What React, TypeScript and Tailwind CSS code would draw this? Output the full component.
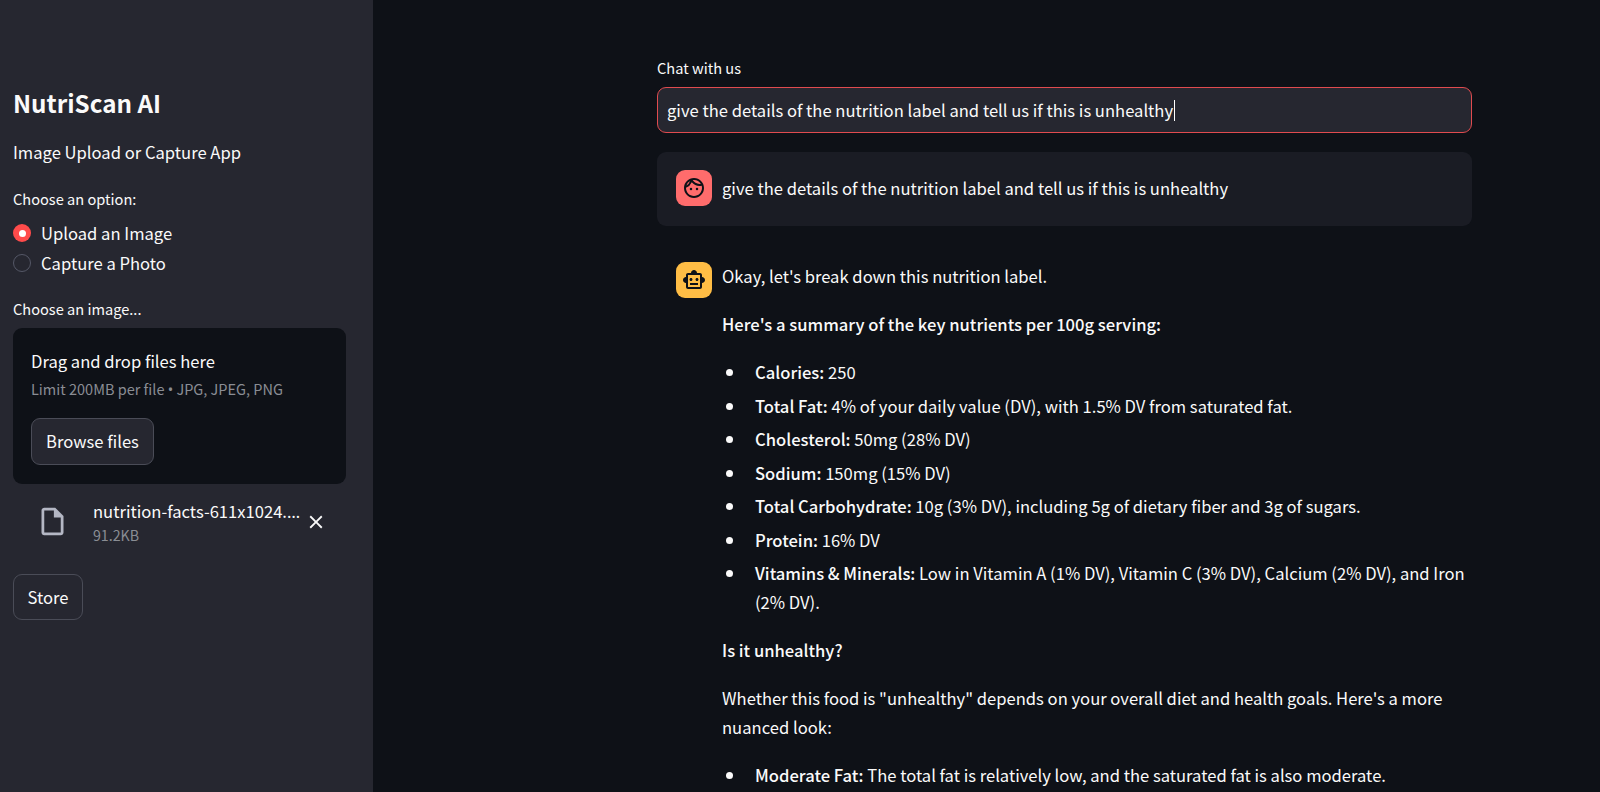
import { MdClose, MdOutlineFace, MdOutlineInsertDriveFile, MdOutlineSmartToy } from 'react-icons/md'

const nutrients = [
  { name: 'Calories:', text: ' 250' },
  { name: 'Total Fat:', text: ' 4% of your daily value (DV), with 1.5% DV from saturated fat.' },
  { name: 'Cholesterol:', text: ' 50mg (28% DV)' },
  { name: 'Sodium:', text: ' 150mg (15% DV)' },
  { name: 'Total Carbohydrate:', text: ' 10g (3% DV), including 5g of dietary fiber and 3g of sugars.' },
  { name: 'Protein:', text: ' 16% DV' },
  { name: 'Vitamins & Minerals:', text: ' Low in Vitamin A (1% DV), Vitamin C (3% DV), Calcium (2% DV), and Iron (2% DV).' },
]

const question = 'give the details of the nutrition label and tell us if this is unhealthy'

function Bullet({ name, text }: { name: string; text: string }) {
  return (
    <li className="mb-[4.5px] flex">
      <span className="mt-[11px] ml-[4px] h-[7px] w-[7px] shrink-0 rounded-full bg-[#fafafa]" />
      <div className="ml-[22px] min-w-0 flex-1">
        <strong className="font-medium">{name}</strong>
        {text}
      </div>
    </li>
  )
}

export default function App() {
  return (
    <div className="flex h-[792px] w-[1600px] overflow-hidden bg-[#0e1117] font-['Noto_Sans_CJK_SC','Noto_Sans',sans-serif] text-[16.6px] text-[#fafafa]">
      {/* Sidebar */}
      <aside className="flex w-[373px] shrink-0 flex-col bg-[#262730] px-[13px] pt-[85px]">
        <h2 className="text-[24.2px] leading-[36px] font-bold">NutriScan AI</h2>
        <p className="mt-[17px] leading-[28px]">Image Upload or Capture App</p>

        <label className="mt-[23px] text-[14.6px] leading-[20px]">Choose an option:</label>
        <div className="mt-[10px] flex flex-col gap-[2px] leading-[28px]">
          <div className="flex items-center gap-[10px]">
            <span className="flex h-[18px] w-[18px] items-center justify-center rounded-full bg-[#ff4b4b]">
              <span className="h-[7px] w-[7px] rounded-full bg-white" />
            </span>
            Upload an Image
          </div>
          <div className="flex items-center gap-[10px]">
            <span className="h-[18px] w-[18px] rounded-full border border-[#555867] bg-[#262730]" />
            Capture a Photo
          </div>
        </div>

        <label className="mt-[22px] text-[14.6px] leading-[20px]">Choose an image...</label>
        <div className="mt-[9px] flex h-[156px] w-[333px] flex-col items-start rounded-[9px] bg-[#0e1117] px-[18px] pt-[20px]">
          <p className="leading-[26px]">Drag and drop files here</p>
          <p className="mt-[3px] text-[14.5px] leading-[24px] text-[#8a8d94]">
            Limit 200MB per file <span className="font-['Noto_Sans']">•</span> JPG, JPEG, PNG
          </p>
          <button className="mt-[17px] flex h-[47px] w-[123px] items-center justify-center rounded-[9px] border border-[#4a4c57] bg-[#262730]">
            Browse files
          </button>
        </div>

        <div className="mt-[14px] flex items-start pl-[23px]">
          <MdOutlineInsertDriveFile className="mt-[7px] text-[#b4b7c4]" size={33} />
          <div className="ml-[24px] w-[211px]">
            <p className="whitespace-nowrap leading-[26px]">
              nutrition-facts-611x1024.<span className="font-['Noto_Sans']">…</span>
            </p>
            <p className="text-[14.2px] leading-[20px] text-[#8a8d94]">91.2KB</p>
          </div>
          <MdClose className="mt-[13px] ml-[1px]" size={22} />
        </div>

        <button className="mt-[29px] flex h-[46px] w-[70px] items-center justify-center rounded-[9px] border border-[#4a4c57]">
          Store
        </button>
      </aside>

      {/* Main */}
      <main className="min-w-0 flex-1 pt-[58px] pl-[284px]">
        <div className="w-[815px]">
          <label className="block text-[14.6px] leading-[20px]">Chat with us</label>
          <div className="mt-[9px] flex h-[46px] items-center rounded-[9px] border border-[#e04b4f] bg-[#262730] px-[9px]">
            {question}
            <span className="ml-[1px] h-[21px] w-px bg-white" />
          </div>

          <div className="mt-[19px] flex h-[74px] items-start rounded-[9px] bg-[#1a1c24] px-[19px] pt-[18px]">
            <span className="flex h-[36px] w-[36px] shrink-0 items-center justify-center rounded-[9px] bg-[#ff6c6c] text-[#0e1117]">
              <MdOutlineFace size={24} />
            </span>
            <p className="ml-[10px] leading-[36px]">{question}</p>
          </div>

          <div className="mt-[18px] flex items-start pt-[18px] pr-[6px] pl-[19px] leading-[29px]">
            <span className="flex h-[36px] w-[36px] shrink-0 items-center justify-center rounded-[9px] bg-[#ffbd45] text-[#0e1117]">
              <MdOutlineSmartToy size={24} />
            </span>
            <div className="ml-[10px] min-w-0 flex-1">
              <p>Okay, let's break down this nutrition label.</p>
              <p className="mt-[19px] font-medium">Here's a summary of the key nutrients per 100g serving:</p>
              <ul className="mt-[19px]">
                {nutrients.map((n) => (
                  <Bullet key={n.name} name={n.name} text={n.text} />
                ))}
              </ul>
              <p className="mt-[19px] font-medium">Is it unhealthy?</p>
              <p className="mt-[19px]">
                Whether this food is "unhealthy" depends on your overall diet and health goals. Here's a more nuanced look:
              </p>
              <ul className="mt-[19px]">
                <Bullet name="Moderate Fat:" text=" The total fat is relatively low, and the saturated fat is also moderate." />
              </ul>
            </div>
          </div>
        </div>
      </main>
    </div>
  )
}
